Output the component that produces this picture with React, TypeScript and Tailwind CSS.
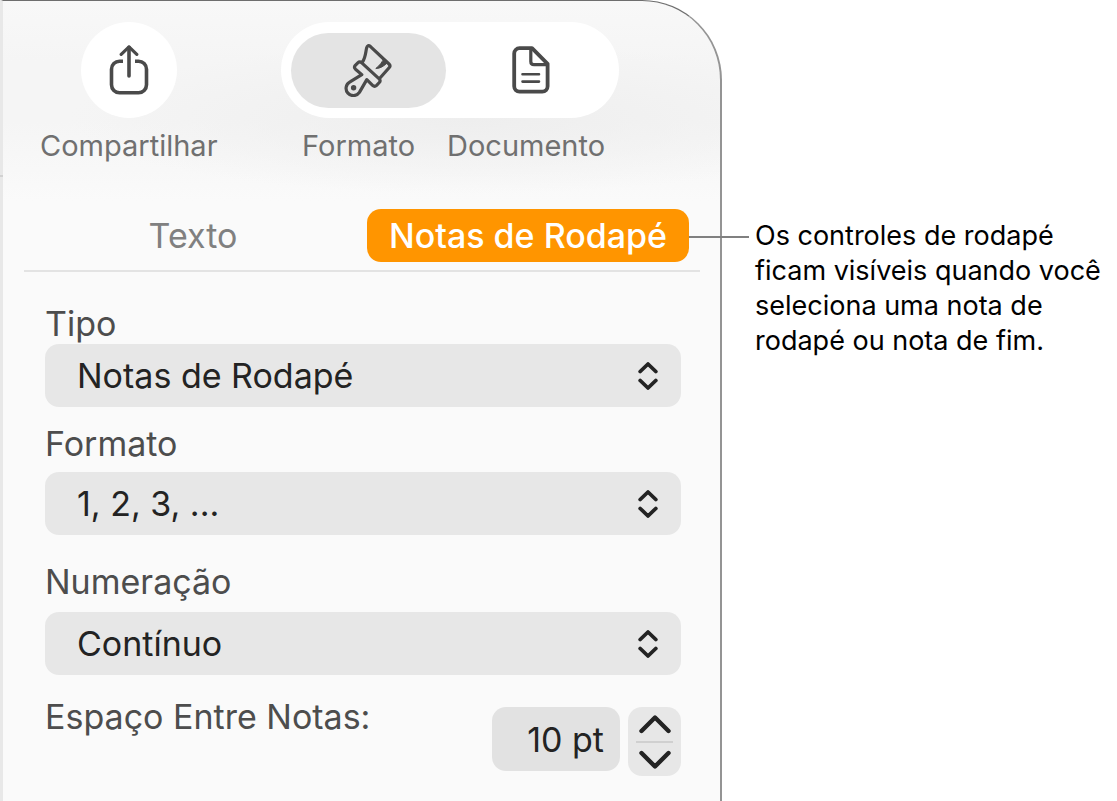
import { useState } from 'react';

interface SelectFieldProps {
  id: string;
  label: string;
  options: string[];
  className: string;
}

function ShareIcon() {
  return (
    <svg width="40" height="50" viewBox="0 0 40 50" fill="none" stroke="currentColor" strokeWidth="3.6" strokeLinecap="round" strokeLinejoin="round" aria-hidden="true">
      <path d="M20 2.2V31" />
      <path d="M12.2 9.4L20 1.9l7.8 7.5" strokeWidth="3.2" />
      <path d="M14 16.2H10.5a8 8 0 0 0-8 8v15.6a8 8 0 0 0 8 8h19a8 8 0 0 0 8-8V24.2a8 8 0 0 0-8-8H26" strokeLinecap="butt" />
    </svg>
  );
}

function BrushIcon() {
  return (
    <svg width="48" height="54" viewBox="0 0 48 54" fill="none" stroke="currentColor" strokeWidth="3.2" strokeLinecap="round" strokeLinejoin="round" aria-hidden="true">
      <path d="M18.5 19C21.5 14.500 21.500 10 22.600 5Q23.600 1.200 26.500 3.600L45 21Q46.800 22.800 45.300 24.500L36 35" />
      <path d="M17.800 19.800Q15.800 17.800 13.800 19.800L11.300 22.300Q9.600 24.400 11.500 26.200L17.800 31.600L6 38.800A7.300 7.300 0 1 0 15.400 49.400L22.800 36.600L28.600 42.300Q30.600 44.200 32.600 42.300L35.300 39.500Q36.900 37.600 35.200 35.900Z" />
      <path d="M38.800 14.500Q40 17.500 36.800 20.500Q35 23 31.800 25.500Q38 25.500 43.500 19.500z" fill="currentColor" strokeWidth="1" />
      <circle cx="9.600" cy="44.700" r="2.700" fill="currentColor" stroke="none" />
    </svg>
  );
}

function DocumentIcon() {
  return (
    <svg width="38" height="48" viewBox="0 0 38 48" fill="none" stroke="currentColor" strokeWidth="3.8" strokeLinejoin="round" aria-hidden="true">
      <path d="M20 2.2H7.5A5.3 5.3 0 0 0 2.2 7.5v32.8a5.3 5.3 0 0 0 5.3 5.3h22.8a5.3 5.3 0 0 0 5.300-5.300V17.800z" />
      <path d="M18.800 2.500V15.500q0 3.200 3.200 3.200H35" strokeWidth="3.2" />
      <path d="M10.500 28.200h16.500M10.500 35.600h16.500" strokeWidth="2.6" strokeLinecap="round" />
    </svg>
  );
}

function SelectField({ id, label, options, className }: SelectFieldProps) {
  return (
    <div className={`flex flex-col ${className}`}>
      <label htmlFor={id} className="text-[34px] leading-10 text-[#4d4d4d]">
        {label}
      </label>
      <div className="relative">
        <select
          id={id}
          className="block h-[63px] w-full cursor-pointer appearance-none rounded-[14px] bg-[#e7e7e7] pr-16 pl-8 text-[34px] leading-10 text-[#232323]"
        >
          {options.map((option) => (
            <option key={option}>{option}</option>
          ))}
        </select>
        <svg
          className="pointer-events-none absolute top-[18px] right-[22px]"
          width="22"
          height="28"
          viewBox="0 0 22 28"
          fill="none"
          stroke="#232323"
          strokeWidth="3.8"
          strokeLinecap="round"
          strokeLinejoin="round"
          aria-hidden="true"
        >
          <path d="M3.2 9.5L11 2L18.800 9.500M3.200 18.500L11 26L18.800 18.500" />
        </svg>
      </div>
    </div>
  );
}

export default function App() {
  const [spacing, setSpacing] = useState(10);

  return (
    <main className="grid min-h-screen grid-cols-[722fr_395fr] bg-white font-['Inter',sans-serif]">
      <section className="relative rounded-tr-[80px] border-t border-r-2 border-l-3 border-t-[#6e6e6e] border-r-[#949494] border-l-[#e8e8e8] bg-[#fafafa] bg-[radial-gradient(ellipse_400px_75px_at_65%_118px,#eeeeee,transparent),linear-gradient(#f8f8f8,#f5f5f5_60px,#f5f5f5_120px,#fafafa_200px)]">
        {/* edge of the toolbar behind the sidebar */}
        <div className="absolute top-[174px] -left-[3px] h-0.5 w-[3px] bg-[#d2d2d2]" />

        <header className="flex gap-[63px] pt-[21px] pl-[37px] text-[#4a4a4a]">
          <div className="flex flex-col items-center gap-2">
            <button aria-label="Compartilhar" className="grid size-24 cursor-pointer place-items-center rounded-full bg-white">
              <ShareIcon />
            </button>
            <span className="text-[29px] leading-10 text-[#707070]">Compartilhar</span>
          </div>
          <div className="flex flex-col gap-2">
            <div className="flex h-24 w-[338px] items-center gap-2 rounded-full bg-white px-[10px]">
              <button aria-label="Formato" className="grid h-[75px] w-[155px] cursor-pointer place-items-center rounded-full bg-[#e4e4e4]">
                <BrushIcon />
              </button>
              <button aria-label="Documento" className="grid h-[75px] flex-1 cursor-pointer place-items-center rounded-full">
                <DocumentIcon />
              </button>
            </div>
            <div className="flex justify-center gap-8 pl-2 text-[29px] leading-10 text-[#707070]">
              <span>Formato</span>
              <span>Documento</span>
            </div>
          </div>
        </header>

        <nav className="mt-[43px] mr-5 ml-[21px] grid grid-cols-2 border-b-2 border-[#e3e3e3] pb-2">
          <button className="cursor-pointer text-[34px] leading-[53px] text-[#808080]">Texto</button>
          <div className="relative mr-[11px] ml-[5px]">
            <button className="block w-full cursor-pointer rounded-[14px] bg-[#ff9500] text-[34px] leading-[53px] font-medium text-white">
              Notas de Rodapé
            </button>
            {/* leader line out to the caption */}
            <div className="absolute top-[27px] left-full h-0.5 w-[60px] bg-[#808080]" />
          </div>
        </nav>

        <form className="pt-8 pr-[39px] pl-[42px]">
          <SelectField id="tipo" label="Tipo" options={['Notas de Rodapé', 'Notas de Fim']} className="" />
          <SelectField id="formato" label="Formato" options={['1, 2, 3, ...', 'i, ii, iii, ...']} className="mt-[17px] gap-2" />
          <SelectField id="numeracao" label="Numeração" options={['Contínuo', 'Reiniciar']} className="mt-[27px] gap-[10px]" />
          <div className="mt-8 flex items-start">
            <label htmlFor="espaco" className="-mt-[10px] mr-auto text-[34px] leading-10 text-[#4d4d4d]">
              Espaço Entre Notas:
            </label>
            <input
              id="espaco"
              value={`${spacing} pt`}
              onChange={(e) => setSpacing(parseInt(e.target.value) || 0)}
              className="h-16 w-32 rounded-[14px] bg-[#e2e2e2] pr-4 text-right text-[34px] leading-10 text-[#232323]"
            />
            <div className="ml-2 flex w-[53px] flex-col rounded-[14px] bg-[#e7e7e7] px-2">
              <button type="button" aria-label="Aumentar" onClick={() => setSpacing(spacing + 1)} className="grid h-9 cursor-pointer place-items-center border-b-2 border-[#d0d0d0]">
                <svg width="36" height="20" viewBox="0 0 36 20" fill="none" stroke="#232323" strokeWidth="4.4" strokeLinecap="round" strokeLinejoin="round" aria-hidden="true">
                  <path d="M4.500 17L18 3.500L31.500 17" />
                </svg>
              </button>
              <button type="button" aria-label="Diminuir" onClick={() => setSpacing(spacing - 1)} className="grid h-[33px] cursor-pointer place-items-center">
                <svg width="36" height="20" viewBox="0 0 36 20" fill="none" stroke="#232323" strokeWidth="4.4" strokeLinecap="round" strokeLinejoin="round" aria-hidden="true">
                  <path d="M4.500 3L18 16.500L31.500 3" />
                </svg>
              </button>
            </div>
          </div>
        </form>
      </section>

      <p className="pt-[218px] pl-[33px] text-[27px] leading-[35px] whitespace-nowrap text-black">
        Os controles de rodapé
        <br />
        ficam visíveis quando você
        <br />
        seleciona uma nota de
        <br />
        rodapé ou nota de fim.
      </p>
    </main>
  );
}
